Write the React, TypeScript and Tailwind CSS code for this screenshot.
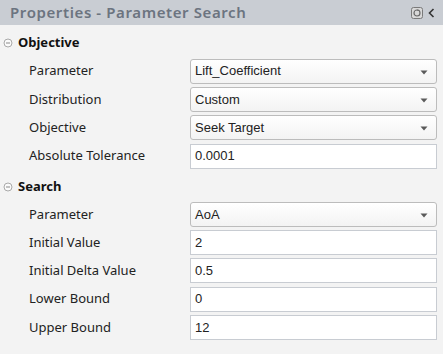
import React from "react";

const Arrow = () => (
  <svg width="8" height="5" viewBox="0 0 8 5" className="absolute right-[8px] top-[10px]">
    <path d="M0.5 0.5 L7.5 0.5 L4 4.5 Z" fill="#5a5a5a" />
  </svg>
);

const Select = ({ value }: { value: string }) => (
  <div className="relative h-[25px] w-[247px] rounded-[3px] border border-[#bcbcbc] bg-gradient-to-b from-white to-[#f3f3f3] flex items-center pl-[4px] text-[13px] text-[#222]" style={{ fontFamily: '"Liberation Sans", Arial, sans-serif' }}>
    {value}
    <Arrow />
  </div>
);

const Input = ({ value }: { value: string }) => (
  <div className="h-[25px] w-[247px] border border-[#c8ccd2] bg-white flex items-center pl-[4px] text-[13px] text-[#222]" style={{ fontFamily: '"Liberation Sans", Arial, sans-serif' }}>
    {value}
  </div>
);

const Row = ({ label, children }: { label: string; children: React.ReactNode }) => (
  <div className="h-[28.3px] flex items-center">
    <div className="w-[190px] pl-[29px] text-[13px] text-[#222]">{label}</div>
    {children}
  </div>
);

const Minus = () => (
  <svg width="10" height="10" viewBox="0 0 10 10" className="mr-[5px]">
    <circle cx="5" cy="5" r="4" fill="#fafafa" stroke="#a9a9a9" strokeWidth="1" />
    <path d="M3 5 H7" stroke="#8a8a8a" strokeWidth="1" />
  </svg>
);

const Header = ({ title, h }: { title: string; h: string }) => (
  <div className={`${h} flex items-center pl-[3px] pt-[3px]`}>
    <Minus />
    <span className="text-[13px] font-bold text-[#111]">{title}</span>
  </div>
);

export default function App() {
  return (
    <div className="w-[443px] h-[354px] bg-[#f3f3f3] overflow-hidden" style={{ fontFamily: '"Noto Sans", "Open Sans", sans-serif' }}>
      <div className="h-[25px] bg-[#c9cdd3] flex items-center pl-[10px] pr-[8px]">
        <span className="text-[15px] font-semibold text-[#6c7480] tracking-[0.6px] flex-1">Properties - Parameter Search</span>
        <svg width="12" height="12" viewBox="0 0 12 12" className="mr-[5px]">
          <rect x="0.5" y="0.5" width="11" height="11" rx="2" fill="#d8d8d8" stroke="#7a7a7a" />
          <circle cx="6" cy="6" r="3" fill="none" stroke="#6a6a6a" strokeWidth="1.2" />
          <path d="M6 3 L8.5 3.5" stroke="#6a6a6a" strokeWidth="1.2" />
        </svg>
        <svg width="7" height="10" viewBox="0 0 7 10">
          <path d="M5.5 1 L1.5 5 L5.5 9" fill="none" stroke="#333" strokeWidth="1.6" />
        </svg>
      </div>
      <Header title="Objective" h="h-[32px]" />
      <Row label="Parameter"><Select value="Lift_Coefficient" /></Row>
      <Row label="Distribution"><Select value="Custom" /></Row>
      <Row label="Objective"><Select value="Seek Target" /></Row>
      <Row label="Absolute Tolerance"><Input value="0.0001" /></Row>
      <Header title="Search" h="h-[30px]" />
      <Row label="Parameter"><Select value="AoA" /></Row>
      <Row label="Initial Value"><Input value="2" /></Row>
      <Row label="Initial Delta Value"><Input value="0.5" /></Row>
      <Row label="Lower Bound"><Input value="0" /></Row>
      <Row label="Upper Bound"><Input value="12" /></Row>
    </div>
  );
}
